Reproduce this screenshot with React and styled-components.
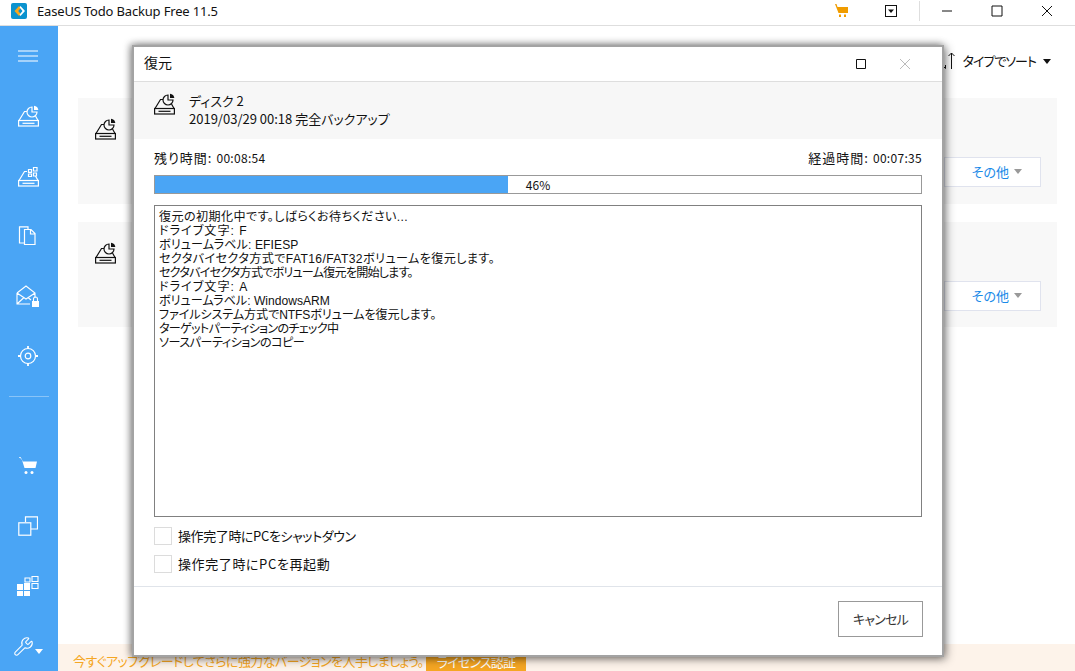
import React from "react";
import styled, { createGlobalStyle } from "styled-components";
import { Wrench } from "lucide-react";

const Global = createGlobalStyle`
  html, body { margin: 0; padding: 0; background: #fff; overflow: hidden; }
  * { box-sizing: border-box; }
  body {
    font-family: "Noto Sans CJK JP", "Noto Sans", sans-serif;
    font-size: 13px;
    font-feature-settings: "palt";
    color: #111;
  }
`;

const Root = styled.div`
  position: relative;
  width: 1075px;
  height: 671px;
  display: flex;
  flex-direction: column;
  overflow: hidden;
`;
const TitleBar = styled.header`
  height: 26px;
  flex: none;
  display: flex;
  align-items: center;
  padding: 0 3px 4px 11px;
  border-bottom: 1px solid #dedede;
`;
const AppTitle = styled.span`
  font-family: "Noto Sans", sans-serif;
  font-size: 13px;
  margin-left: 10px;
  flex: 1;
  letter-spacing: -0.17px;
`;
const TopIcon = styled.span`
  width: ${(p) => p.$w}px;
  height: 21px;
  display: flex;
  align-items: center;
  justify-content: center;
  flex: none;
`;
const TopRule = styled.span`
  width: 1px;
  height: 20px;
  background: #dedede;
  margin: 0 2px 0 3px;
`;
const Body = styled.div`
  flex: 1;
  display: flex;
  min-height: 0;
`;
const Sidebar = styled.nav`
  width: 58px;
  flex: none;
  background: #4aa5f5;
  display: flex;
  flex-direction: column;
`;
const SideItem = styled.div`
  height: 60px;
  flex: none;
  display: flex;
  align-items: center;
  justify-content: center;
  padding-right: 2px;
`;
const SideRule = styled.div`
  height: 1px;
  margin: 10px 9px 39px;
  background: rgba(255, 255, 255, 0.35);
  flex: none;
`;
const Main = styled.main`
  flex: 1;
  display: flex;
  flex-direction: column;
  min-width: 0;
`;
const SortRow = styled.div`
  height: 72px;
  flex: none;
  display: flex;
  align-items: flex-start;
  justify-content: flex-end;
  gap: 7px;
  padding: 26px 24px 0 0;
  line-height: 18px;
`;
const SortLabel = styled.span`
  letter-spacing: -1px;
`;
const Caret = styled.span`
  display: inline-block;
  width: 0;
  height: 0;
  border-left: 4px solid transparent;
  border-right: 4px solid transparent;
  border-top: 5px solid ${(p) => p.$c || "#111"};
`;
const SortCaret = styled(Caret)`
  margin: 7px 0 0 0;
`;
const ToolCaret = styled(Caret)`
  margin: 10px 0 0 1px;
`;
const Cards = styled.div`
  display: flex;
  flex-direction: column;
  gap: 18px;
  padding: 0 18px 0 20px;
  flex: 1;
`;
const Card = styled.section`
  height: ${(p) => p.$h}px;
  background: #f8f8f8;
  padding: 20px 16px 0 17px;
  position: relative;
  display: flex;
  align-items: flex-start;
  justify-content: space-between;
`;
const MoreButton = styled.div`
  margin-top: 39px;
  width: 97px;
  height: 30px;
  background: #fff;
  border: 1px solid #e0e3ee;
  color: #1a8ae8;
  display: flex;
  align-items: center;
  justify-content: flex-end;
  gap: 5px;
  padding: 0 18px 2px 0;
  font-size: 13px;
`;
const Banner = styled.footer`
  height: 27px;
  flex: none;
  background: #fdf3ea;
  color: #f5a623;
  display: flex;
  align-items: flex-end;
  padding-left: 15px;
  font-size: 13px;
`;
const BannerText = styled.span`
  width: 353px;
  line-height: 20px;
  white-space: nowrap;
  letter-spacing: -0.55px;
`;
const LicenseButton = styled.span`
  width: 100px;
  height: 20px;
  background: #f5a623;
  color: #fff;
  display: flex;
  align-items: center;
  justify-content: center;
  letter-spacing: -0.8px;
`;

const Dialog = styled.div`
  position: absolute;
  left: 132px;
  top: 45px;
  width: 812px;
  height: 612px;
  background: #fff;
  border: 2px solid #a3a3a3;
  box-shadow: 2px 2px 9px rgba(0, 0, 0, 0.45), -2px -1px 7px rgba(0, 0, 0, 0.35);
  display: flex;
  flex-direction: column;
`;
const DialogHead = styled.div`
  height: 35px;
  flex: none;
  display: flex;
  align-items: center;
  padding: 0 31px 1px 10px;
  border-bottom: 1px solid #dedede;
`;
const DialogTitle = styled.span`
  flex: 1;
  font-size: 14px;
  line-height: 18px;
  margin-bottom: 3px;
`;
const HeadButtons = styled.div`
  display: flex;
  align-items: center;
  gap: 33px;
`;
const Info = styled.div`
  height: 57px;
  flex: none;
  background: #f7f7f7;
  display: flex;
  align-items: flex-start;
  gap: 14px;
  padding: 11px 20px 0;
`;
const InfoText = styled.div`
  display: flex;
  flex-direction: column;
  line-height: 18px;
  margin-top: -1px;
`;
const Content = styled.div`
  flex: 1;
  display: flex;
  flex-direction: column;
  padding: 10px 20px 0;
  min-height: 0;
`;
const TimeRow = styled.div`
  height: 18px;
  line-height: 18px;
  display: flex;
  justify-content: space-between;
  margin-bottom: 8px;
`;
const TimeGroup = styled.span`
  display: flex;
  gap: 4px;
`;
const TimeLabel = styled.span`
  letter-spacing: 1px;
`;
const TimeValue = styled.span`
  font-size: 12px;
  letter-spacing: 0.3px;
`;
const Progress = styled.div`
  position: relative;
  height: 19px;
  border: 1px solid #999;
  background: #fff;
  flex: none;
`;
const Fill = styled.div`
  height: 100%;
  background: #4aa5f5;
`;
const ProgressLabel = styled.span`
  position: absolute;
  inset: 0;
  display: flex;
  align-items: center;
  justify-content: center;
  padding-bottom: 1px;
  font-size: 12px;
`;
const LogBox = styled.div`
  margin-top: 11px;
  height: 312px;
  flex: none;
  border: 1px solid #808080;
  padding: 4px 4px 3px;
  line-height: 14px;
  font-family: "Liberation Sans", "Noto Sans CJK JP", sans-serif;
  font-size: 12.1px;
`;
const LogLine = styled.div`
  white-space: pre;
  letter-spacing: ${(p) => p.$sp}px;
`;
const Options = styled.div`
  display: flex;
  flex-direction: column;
  gap: 10px;
  margin-top: 10px;
`;
const Option = styled.label`
  display: flex;
  align-items: center;
  gap: 6px;
  height: 18px;
`;
const OptionText = styled.span`
  margin-bottom: 2px;
  letter-spacing: ${(p) => p.$sp}px;
`;
const Check = styled.span`
  width: 18px;
  height: 18px;
  border: 1px solid #dcdcdc;
  background: #fff;
  flex: none;
`;
const DialogFoot = styled.div`
  height: 69px;
  flex: none;
  border-top: 1px solid #e0e4ea;
  display: flex;
  justify-content: flex-end;
  padding: 14px 19px 0 0;
`;
const CancelButton = styled.div`
  width: 85px;
  height: 36px;
  border: 1px solid #999;
  color: #333;
  display: flex;
  align-items: center;
  justify-content: center;
  padding-bottom: 2px;
  letter-spacing: -0.8px;
`;

const Ico = ({ w = 20, h = 20, c = "#fff", sw = 1.2, children }) => (
  <svg width={w} height={h} viewBox={`0 0 ${w} ${h}`} fill="none" stroke={c} strokeWidth={sw}>
    {children}
  </svg>
);

const DiskBase = () => (
  <>
    <path d="M1 15.500 6.500 6.500H9M17.500 11l2.500 4.500" />
    <rect x=".6" y="15.500" width="19.800" height="5.500" />
    <path d="M4.500 18.300h12" />
  </>
);
const DiskPie = ({ c = "#111" }) => (
  <Ico c={c} w={21} h={22}>
    <DiskBase />
    <path d="M14 2a5 5 0 1 0 5 5h-5z" fill="none" />
    <path d="M16 .7a5 5 0 0 1 4.300 4.300h-4.300z" fill={c} stroke="none" />
  </Ico>
);
const DiskGrid = () => (
  <Ico w={21} h={22}>
    <DiskBase />
    <path d="M10.500 4.500h3v2.800h-3zM15.500 2.500h3.500v3.500h-3.500zM10.500 9h3v2.500h-3zM15.500 8h3v3h-3z" />
  </Ico>
);
const Hamburger = () => (
  <Ico h={12}>
    <path d="M0 1h20M0 6h20M0 11h20" />
  </Ico>
);
const Files = () => (
  <Ico h={20}>
    <path d="M7 17H1.500V.800H10V3" />
    <path d="M6.500 3.500H13l4 4v11H6.500zM12.500 3.500v4.500h4.500" fill="#4aa5f5" />
  </Ico>
);
const MailLock = () => (
  <svg width="24" height="24" viewBox="0 0 24 24" fill="none" stroke="#fff" strokeWidth="1.1">
    <path d="M1 9 10 2l9 7v5M1 9v11h13M1 9l9 6 9-6M1 20l7-6.500M12 13.500l3 2.500" />
    <rect x="16" y="17" width="7" height="6" fill="#fff" stroke="none" />
    <path d="M17.500 17v-2a2 2 0 0 1 4 0v2" />
  </svg>
);
const Target = () => (
  <Ico>
    <circle cx="10" cy="10" r="7.500" />
    <circle cx="10" cy="10" r="2.800" />
    <path d="M10 0v3M10 17v3M0 10h3M17 10h3" strokeWidth="1.800" />
  </Ico>
);
const Cart = ({ c = "#fff", w = 18, h = 18 }) => (
  <svg width={w} height={h} viewBox="0 0 18 18" fill={c}>
    <path d="M0 0h1.500l2.500 4.500h14L16.500 11H5.500L3 3 1 .8H0z" />
    <circle cx="7" cy="15.500" r="1.500" />
    <circle cx="13" cy="15.500" r="1.500" />
  </svg>
);
const TopCart = () => (
  <svg width="13" height="13" viewBox="0 0 13 13" fill="#f09c00">
    <path d="M0 0h1.500l1 3H13v6H3.500zM4 10.500h2V13H4zM9 10.500h2V13H9z" />
  </svg>
);
const Copies = () => (
  <Ico>
    <path d="M7.500 6V.800h12V13H13" />
    <rect x=".8" y="6.800" width="12" height="12.400" />
  </Ico>
);
const WinGrid = () => (
  <svg width="22" height="20" viewBox="0 0 22 20" fill="#fff">
    <path d="M0 8h6v6H0zM7 7h6v7H7zM0 15h6v5H0zM7 15h6v5H7z" />
    <path d="M8 2h5v4H8zM15 .500h6v5h-6zM15 7.500h6v5h-6z" fill="none" stroke="#fff" strokeWidth="1.100" />
  </svg>
);
const Logo = () => (
  <svg width="16" height="16" viewBox="0 0 16 16">
    <rect width="16" height="16" rx="2" fill="#0b93cf" />
    <path d="M8 3 3.500 8 8 13l1.800-2L7.200 8 9.800 5z" fill="#f6a71c" />
    <path d="M9.500 3 14 8l-4.500 5-1-1.200L11.500 8 8.500 4.200z" fill="#fff" />
  </svg>
);
const TrayBox = () => (
  <svg width="12" height="12" viewBox="0 0 12 12" fill="none" stroke="#111">
    <rect x=".5" y=".5" width="11" height="11" />
    <path d="M3 4.500h6L6 8z" fill="#111" stroke="none" />
  </svg>
);
const Line = ({ d, w = 12, h = 12, c = "#111" }) => (
  <svg width={w} height={h} viewBox={`0 0 ${w} ${h}`} fill="none" stroke={c}>
    <path d={d} />
  </svg>
);
const SortIcon = () => (
  <svg width="13" height="18" viewBox="0 0 13 18" fill="none" stroke="#111">
    <path d="M2.500 13v3.500M.5 14.500l2 2M8.500 1v16M5.500 4l3-3 3 3" />
  </svg>
);

const LOG = [
  ["復元の初期化中です。しばらくお待ちください...", 0.4],
  ["ドライブ文字: F", 1],
  ["ボリュームラベル: EFIESP", 0.1],
  ["セクタバイセクタ方式でFAT16/FAT32ボリュームを復元します。", 0.4],
  ["セクタバイセクタ方式でボリューム復元を開始します。", -0.8],
  ["ドライブ文字: A", 1],
  ["ボリュームラベル: WindowsARM", 0],
  ["ファイルシステム方式でNTFSボリュームを復元します。", -0.1],
  ["ターゲットパーティションのチェック中", -0.7],
  ["ソースパーティションのコピー", -0.5],
];

const MoreBtn = () => (
  <MoreButton>
    その他 <Caret $c="#999" />
  </MoreButton>
);

export default function App() {
  const pct = 46;
  return (
    <Root>
      <Global />
      <TitleBar>
        <Logo />
        <AppTitle>EaseUS Todo Backup Free 11.5</AppTitle>
        <TopIcon $w={50}><TopCart /></TopIcon>
        <TopIcon $w={50}><TrayBox /></TopIcon>
        <TopRule />
        <TopIcon $w={50}><Line d="M1 6h10" /></TopIcon>
        <TopIcon $w={50}><Line d="M1 1h10v10H1z" /></TopIcon>
        <TopIcon $w={50}><Line d="M1 1l10 10M11 1 1 11" /></TopIcon>
      </TitleBar>
      <Body>
        <Sidebar>
          <SideItem><Hamburger /></SideItem>
          <SideItem><DiskPie c="#fff" /></SideItem>
          <SideItem><DiskGrid /></SideItem>
          <SideItem><Files /></SideItem>
          <SideItem><MailLock /></SideItem>
          <SideItem><Target /></SideItem>
          <SideRule />
          <SideItem><Cart /></SideItem>
          <SideItem><Copies /></SideItem>
          <SideItem><WinGrid /></SideItem>
          <SideItem><Wrench size={21} color="#fff" strokeWidth={1.2} /><ToolCaret $c="#fff" /></SideItem>
        </Sidebar>
        <Main>
          <SortRow>
            <SortIcon />
            <SortLabel>タイプでソート</SortLabel>
            <SortCaret />
          </SortRow>
          <Cards>
            <Card $h={106}><DiskPie /><MoreBtn /></Card>
            <Card $h={105}><DiskPie /><MoreBtn /></Card>
          </Cards>
          <Banner>
            <BannerText>今すぐアップグレードしてさらに強力なバージョンを入手しましょう。</BannerText>
            <LicenseButton>ライセンス認証</LicenseButton>
          </Banner>
        </Main>
      </Body>
      <Dialog>
        <DialogHead>
          <DialogTitle>復元</DialogTitle>
          <HeadButtons>
            <Line d="M.5.500h9v9h-9z" w={10} h={10} />
            <Line d="M1 1l10 10M11 1 1 11" c="#bbb" />
          </HeadButtons>
        </DialogHead>
        <Info>
          <DiskPie />
          <InfoText>
            <span>ディスク 2</span>
            <span>2019/03/29 00:18 完全バックアップ</span>
          </InfoText>
        </Info>
        <Content>
          <TimeRow>
            <TimeGroup><TimeLabel>残り時間:</TimeLabel><TimeValue>00:08:54</TimeValue></TimeGroup>
            <TimeGroup><TimeLabel>経過時間:</TimeLabel><TimeValue>00:07:35</TimeValue></TimeGroup>
          </TimeRow>
          <Progress>
            <Fill style={{ width: `${(pct / 100) * 768}px` }} />
            <ProgressLabel>{pct}%</ProgressLabel>
          </Progress>
          <LogBox>
            {LOG.map(([text, sp]) => (
              <LogLine key={text} $sp={sp}>{text}</LogLine>
            ))}
          </LogBox>
          <Options>
            <Option><Check /><OptionText $sp={-0.4}>操作完了時にPCをシャットダウン</OptionText></Option>
            <Option><Check /><OptionText $sp={0.6}>操作完了時にPCを再起動</OptionText></Option>
          </Options>
        </Content>
        <DialogFoot>
          <CancelButton>キャンセル</CancelButton>
        </DialogFoot>
      </Dialog>
    </Root>
  );
}
